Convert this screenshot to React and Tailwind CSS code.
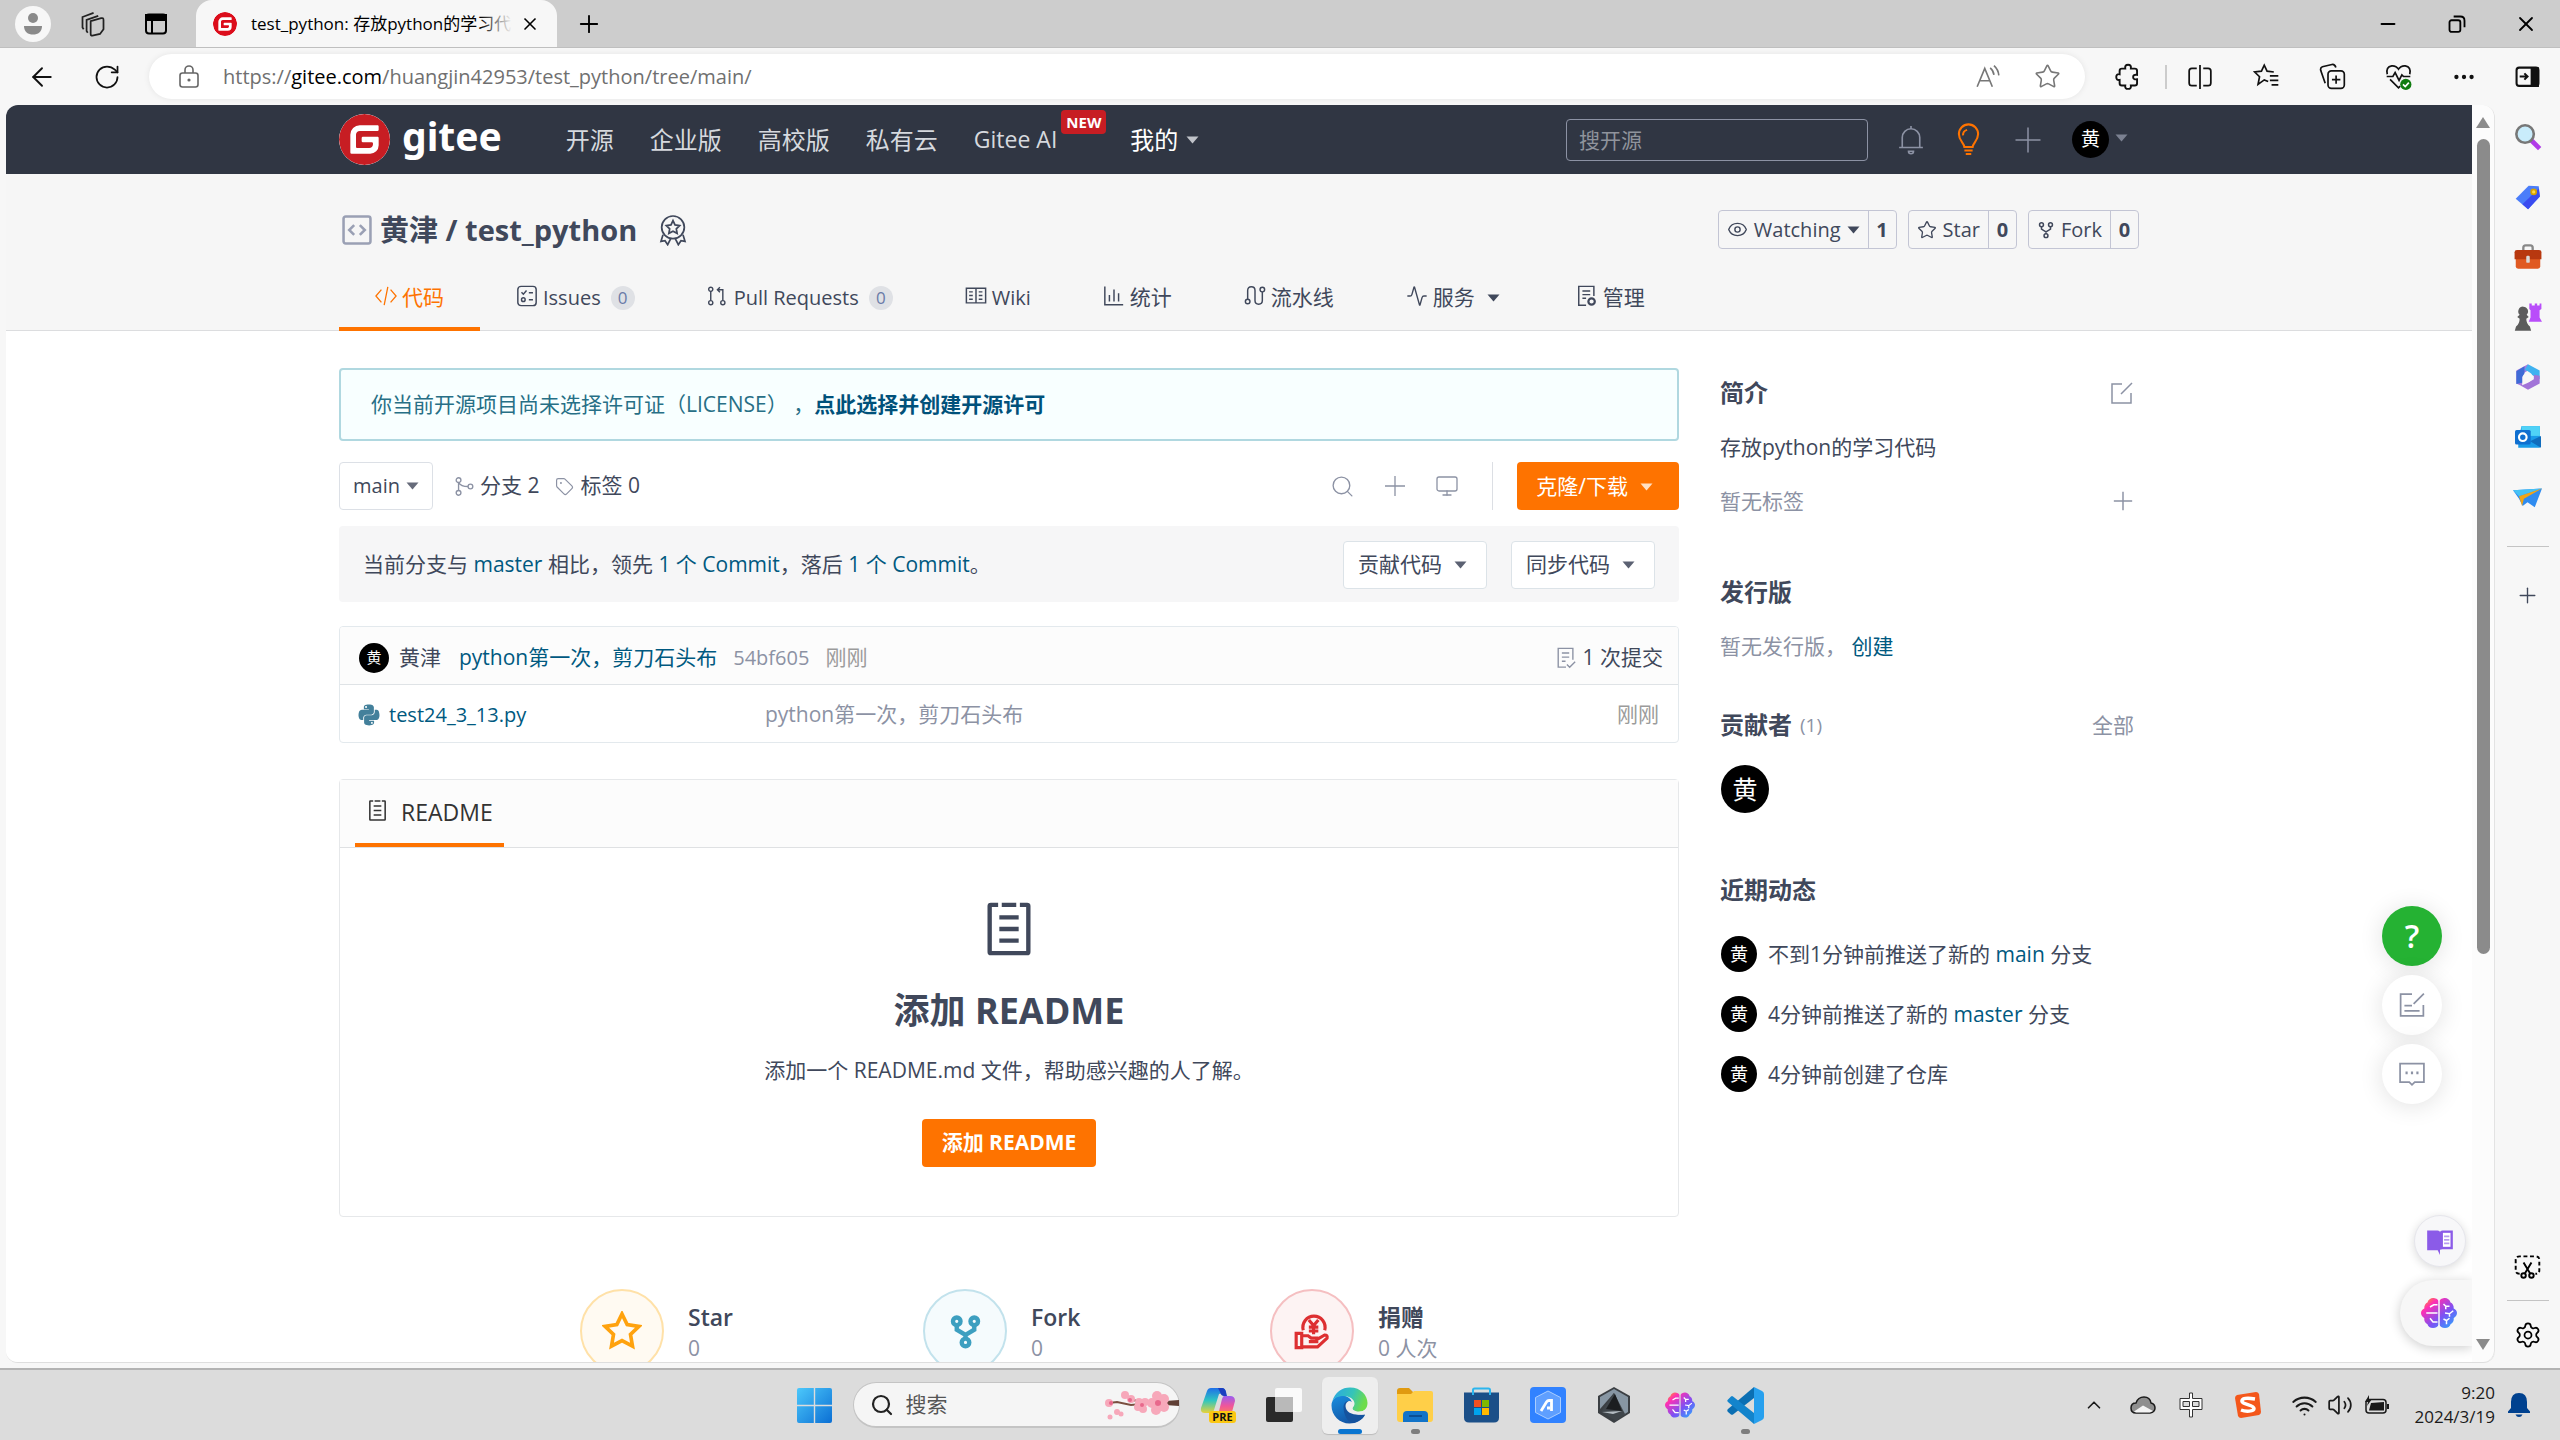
import {
  ArrowLeft,
  RotateCw,
  Star,
  Plus,
  X,
  Minus,
  Search,
  Monitor,
  Tag,
  ChevronUp,
  Activity,
  Ellipsis,
  Settings,
  Eye,
  Volume2,
  Wifi,
} from 'lucide-react';
import { SiGitee } from 'react-icons/si';
import { FaPython } from 'react-icons/fa';

function Icon({ size = 24, box = 24, sw = 1.5, className = '', children }) {
  return (
    <svg
      width={size}
      height={size}
      viewBox={`0 0 ${box} ${box}`}
      fill="none"
      stroke="currentColor"
      strokeWidth={sw}
      className={`shrink-0 ${className}`}
      aria-hidden="true"
    >
      {children}
    </svg>
  );
}

function Caret({ className = '' }) {
  return (
    <svg width="13" height="8" viewBox="0 0 13 8" className={`shrink-0 ${className}`} fill="currentColor" aria-hidden="true">
      <path d="M0.5 0.5h12L6.5 7.5z" />
    </svg>
  );
}

function Avatar({ className }) {
  return (
    <span className={`flex shrink-0 items-center justify-center rounded-full bg-black leading-none text-white ${className}`}>
      黄
    </span>
  );
}

function ForkIcon({ size, sw, className }) {
  return (
    <Icon size={size} sw={sw} className={className}>
      <circle cx="6" cy="5" r="2.6" />
      <circle cx="18" cy="5" r="2.6" />
      <circle cx="12" cy="19.5" r="2.6" />
      <path d="M6 7.6v3.2l6 3.6 6-3.6V7.6M12 14v3" />
    </Icon>
  );
}

function ReadmeIcon({ size, sw, className }) {
  return (
    <Icon size={size} sw={sw} className={className}>
      <path d="M7.500 2H4.500q-.5 0-.5.5V21.500q0 .5.5.5h15q.5 0 .5-.5V2.500q0-.5-.5-.5H16.500M9 2h6M8 7.200h8M8 12h8M8 16.800h8" />
    </Icon>
  );
}

function BrainIcon({ size, id }) {
  return (
    <Icon size={size} sw={1.2}>
      <defs>
        <linearGradient id={id} x1="0" y1="0" x2="1" y2="1">
          <stop offset="0" stopColor="#ffb300" />
          <stop offset="0.25" stopColor="#ff2fb3" />
          <stop offset="0.6" stopColor="#7b52f4" />
          <stop offset="1" stopColor="#20b4ff" />
        </linearGradient>
      </defs>
      <path
        fill={`url(#${id})`}
        stroke="none"
        d="M11.500 4v16c0 1-1.500 2-3.500 2s-3.300-1-3.700-2.500C2.500 18.500 2 17 2.200 15.500 1 14.500 0 13.500 0 12s1-2.500 2.200-3C2 7 3 5.500 4.300 5 4.800 3 6.500 2 8 2s3.500.8 3.500 2zM12.500 4v16c0 1 1.500 2 3.500 2s3.300-1 3.700-2.500c1.800-1 2.300-2.500 2.100-4C23 14.500 24 13.500 24 12s-1-2.500-2.200-3c.2-2-.8-3.500-2.100-4-.5-2-2.200-3-3.700-3s-3.500.8-3.500 2z"
      />
      <path stroke="#fff" strokeWidth="1" d="M11 6.500H8.500L6 8M11 12H3.500M11 18H8l-2-2.500M15 6l1.500 1.500L19 7.500M16.500 7.500V9.500M16 12l3 .5 2.500-2M19 12.500v2M15 16l2 1 2-1.500M17 17v2.500" />
    </Icon>
  );
}

function TitleBar() {
  return (
    <div className="flex h-12 shrink-0 items-center border-b border-[#bfbfbf] bg-[#cdcdcd]">
      <button className="ml-[15px] flex size-9 items-center justify-center rounded-full bg-[#f7f7f7] text-[#8a8a8a]" aria-label="个人资料">
        <svg width="20" height="24" viewBox="0 0 20 24" fill="currentColor">
          <circle cx="10" cy="6" r="5" />
          <path d="M1 14h18c0 6-4 8.500-9 8.500S1 20 1 14z" />
        </svg>
      </button>
      <button className="ml-7 flex size-7 items-center justify-center" aria-label="工作区">
        <Icon size={28} sw={1.5} className="text-[#222]">
          <path d="M10 9.500l9-2.500q2-.5 2 1.500v8l-3 4-6.500 1.500q-1.500 0-1.500-1.500z" />
          <path d="M7.500 19.500L6.500 18V8.500L16.500 5M4 16.500L3 15V6l9.500-3.500" />
        </Icon>
      </button>
      <button className="ml-[35px] flex size-7 items-center justify-center" aria-label="标签页操作">
        <Icon size={24} sw={2} className="text-black">
          <rect x="2" y="2.500" width="20" height="19" rx="3" />
          <path d="M2 3h20v5H2z" fill="currentColor" />
          <path d="M8 8v13" />
        </Icon>
      </button>
      <div className="ml-[26px] flex h-full w-[361px] items-center rounded-t-2xl bg-[#f7f7f7] px-[17px]">
        <SiGitee className="size-6 shrink-0 rounded-full bg-white text-[#dc0d1b]" />
        <span className="relative ml-[14px] flex-1 overflow-hidden text-[17px] whitespace-nowrap text-black">
          test_python: 存放python的学习代码
          <span className="absolute inset-y-0 right-0 w-8 bg-linear-to-r from-transparent to-[#f7f7f7]" />
        </span>
        <button aria-label="关闭标签页" className="ml-2 text-black">
          <X className="size-5" strokeWidth={2} />
        </button>
      </div>
      <button className="ml-[18px] text-black" aria-label="新建标签页">
        <Plus size={28} strokeWidth={1.600} />
      </button>
      <div className="ml-auto flex items-center text-black">
        <button className="flex w-[69px] justify-center" aria-label="最小化">
          <Minus size={22} strokeWidth={2.200} />
        </button>
        <button className="flex w-[69px] justify-center" aria-label="还原">
          <Icon size={20} sw={2.200}>
            <rect x="3" y="7.500" width="13" height="14" rx="2.500" />
            <path d="M8 3h8q5 0 5 5v8" />
          </Icon>
        </button>
        <button className="flex w-[69px] justify-center" aria-label="关闭">
          <X size={24} strokeWidth={1.800} />
        </button>
      </div>
    </div>
  );
}

function AddressBar() {
  return (
    <div className="flex h-[57px] shrink-0 items-center bg-[#f7f7f7] text-[#111]">
      <button className="ml-[27px]" aria-label="返回">
        <ArrowLeft size={30} strokeWidth={1.500} />
      </button>
      <button className="ml-9" aria-label="刷新">
        <RotateCw size={28} strokeWidth={1.500} />
      </button>
      <div className="ml-7 flex h-[45px] min-w-0 flex-1 items-center rounded-full bg-white pr-6 pl-7 shadow-[0_0_6px_rgba(0,0,0,0.08)]">
        <Icon size={24} sw={1.600} className="text-[#666]">
          <rect x="3" y="8" width="18" height="14" rx="2.500" />
          <path d="M8 8V5a4 4 0 0 1 8 0v3" />
          <circle cx="12" cy="15" r="0.8" fill="currentColor" />
        </Icon>
        <div className="ml-[22px] flex-1 text-[20px] text-[#707070]">
          https://<span className="text-black">gitee.com</span>/huangjin42953/test_python/tree/main/
        </div>
        <button aria-label="大声朗读" className="text-[#777]">
          <Icon size={26} sw={1.500}>
            <path d="M2 21L9 4l7 17M4.500 15.500h9M14 3.500q3 2.500 3.500 6.500M17.500 1.500q4 3.500 4.500 9" />
          </Icon>
        </button>
        <button aria-label="收藏" className="ml-[33px] text-[#777]">
          <Star size={27} strokeWidth={1.400} />
        </button>
      </div>
      <button className="ml-[29px]" aria-label="扩展">
        <Icon size={27} sw={1.700}>
          <path d="M7 5h3q-.5-3.500 2.500-3.500T15 5h3.500q2 0 2 2v3.500q-3.500-.5-3.500 2t3.500 2V18q0 2-2 2H15q.5 3-2.500 3T10 20H7q-2 0-2-2v-3q-3 .5-3-2.500T5 10V7q0-2 2-2z" />
        </Icon>
      </button>
      <div className="ml-6 h-6 w-[2px] bg-[#ccc]" />
      <div className="flex items-center pr-[3px]">
        <button className="flex w-[66px] justify-center" aria-label="分屏">
          <Icon size={26} sw={1.600}>
            <path d="M12 1v22M9 4H4.500Q2 4 2 6.500v11Q2 20 4.500 20H9M15 4h4.500Q22 4 22 6.500v11q0 2.500-2.500 2.500H15" />
          </Icon>
        </button>
        <button className="flex w-[66px] justify-center" aria-label="收藏夹">
          <Icon size={27} sw={1.500}>
            <path d="M13.500 16.500L10 15l-5.500 4 1.300-6.800L1.500 8l6-.8L10 2l2.500 5.200 6 .8M15 11.500h7.500M15 15.500h7.500M16.500 19.500h6" />
          </Icon>
        </button>
        <button className="flex w-[66px] justify-center" aria-label="集锦">
          <Icon size={27} sw={1.500}>
            <rect x="8" y="7" width="14.500" height="15.500" rx="3" />
            <path d="M15.200 11v7.500M11.500 14.800H19M5.500 18L1.500 6.500Q1 4 3 3.300l8.500-2q2.500-.5 3.500 2.700" />
          </Icon>
        </button>
        <button className="relative flex w-[66px] justify-center" aria-label="浏览器概要">
          <Icon size={27} sw={1.500}>
            <path d="M2 10Q.5 3.500 6 2.500q4-.3 6 3 2-3.300 6-3 5.500 1 4 7.500M1.500 12H7l2-3.500 3.500 7 2.500-5 1.500 1.500h6M4.500 14.500L12 22l1.500-1.500" />
            <circle cx="18.500" cy="19" r="5" fill="#107c10" stroke="none" />
            <path d="M16 19l2 2 3.200-3.500" stroke="#fff" />
          </Icon>
        </button>
        <button className="flex w-[66px] justify-center" aria-label="设置及其他">
          <Ellipsis size={26} strokeWidth={2} />
        </button>
        <button className="flex w-[60px] justify-center" aria-label="侧栏">
          <Icon size={25} sw={2}>
            <rect x="1.500" y="3.500" width="21" height="17.500" rx="2.500" />
            <path d="M16 4h6v17h-6z" fill="currentColor" />
            <path d="M4.500 12h7M9 9l3 3-3 3" />
          </Icon>
        </button>
      </div>
    </div>
  );
}

function SiteHeader() {
  return (
    <header className="h-[69px] bg-[#303643] text-[24px] text-[#d6d9de]">
      <div className="mx-auto flex h-full max-w-[1800px] items-center">
        <a href="#home" className="flex items-center">
          <SiGitee className="size-[51px] rounded-full bg-white text-[#c71d23]" />
          <span className="ml-3 pb-2 font-['Noto_Sans',sans-serif] text-[39px] leading-none font-bold text-white">gitee</span>
        </a>
        <nav className="ml-16 flex items-center gap-9">
          <a href="#explore">开源</a>
          <a href="#enterprise">企业版</a>
          <a href="#education">高校版</a>
          <a href="#cloud">私有云</a>
          <a href="#ai" className="relative mr-[37px] text-[23px]">
            Gitee AI
            <span className="absolute -top-3 left-full ml-1 rounded-sm bg-[#c71d23] px-[5px] text-[15px] leading-6 font-bold text-white">NEW</span>
          </a>
          <a href="#mine" className="flex items-center gap-2 text-white">
            我的 <Caret className="text-[#c0c3c9]" />
          </a>
        </nav>
        <input
          aria-label="搜开源"
          placeholder="搜开源"
          className="ml-auto h-[42px] w-[302px] rounded-sm border border-[#8c92a4] bg-transparent px-3 text-[21px] placeholder:text-[#8f939c]"
        />
        <div className="ml-[28px] flex items-center pr-[11px] text-[#8c92a4]">
          <button aria-label="通知">
            <Icon size={30} sw={1.300}>
              <path d="M2.500 18h19M5 18V10a7 7 0 0 1 14 0v8M12 3V.8M10 21h4a2 2 0 0 1-4 0z" />
            </Icon>
          </button>
          <button aria-label="动态" className="ml-[26px] text-[#fe7300]">
            <Icon size={33} sw={1.500}>
              <path d="M9 17.500c0-3-4-4.500-4-9.500a7 7 0 0 1 14 0c0 5-4 6.500-4 9.500zM8 9a4 4 0 0 1 3-4M9 20h6M10 22.500h4" />
            </Icon>
          </button>
          <button aria-label="新建" className="ml-[28px]">
            <Icon size={30} sw={1.200}>
              <path d="M12 2v20M2 12h20" />
            </Icon>
          </button>
          <button aria-label="账户" className="ml-[29px] flex items-center gap-1.5">
            <Avatar className="size-[37px] text-[19px]" />
            <Caret className="mb-1 text-[#7b8191]" />
          </button>
        </div>
      </div>
    </header>
  );
}

function CountButton({ icon, label, count, caret }) {
  return (
    <div className="flex h-[39px] items-stretch rounded-sm border border-[#c3c5d4] text-[20px] text-[#40485b]">
      <button className="flex items-center gap-1.5 px-2">
        {icon}
        {label}
        {caret && <Caret className="text-[#40485b]" />}
      </button>
      <a href="#count" className="flex w-7 items-center justify-center border-l border-[#c3c5d4] font-bold">
        {count}
      </a>
    </div>
  );
}

function RepoTab({ icon, label, badge, caret, active }) {
  return (
    <a
      href="#tab"
      className={`flex h-full items-center border-b-4 px-9 ${active ? 'border-[#fe7300] text-[#fe7300]' : 'border-transparent'}`}
    >
      <span className="mb-1 flex w-[27px] shrink-0">{icon}</span>
      {label}
      {badge && (
        <span className="ml-2.5 flex size-6 items-center justify-center rounded-full bg-[#dfe1e5] text-[17px] text-[#6a7ba8]">{badge}</span>
      )}
      {caret && <Caret className="mr-1 ml-3" />}
    </a>
  );
}

function RepoHeader() {
  return (
    <section className="h-[157px] border-b border-[#dcdddf] bg-[#f6f6f6] text-[#40485b]">
      <div className="mx-auto flex h-full max-w-[1800px] flex-col">
        <div className="flex h-[95px] items-center pt-4">
          <Icon size={34} sw={1.800} className="ml-px text-[#9aa0b4]">
            <rect x="2.500" y="2.500" width="19" height="19" rx="1.500" />
            <path d="M10 8.500L6.500 12l3.500 3.500M14 8.500l3.500 3.500-3.500 3.500" />
          </Icon>
          <h1 className="ml-1.5 text-[29px] font-bold">
            <a href="#owner">黄津</a> / <a href="#repo">test_python</a>
          </h1>
          <Icon size={32} sw={1.300} className="ml-5">
            <circle cx="12" cy="10" r="8.500" />
            <path d="M12 5l1.500 3.200 3.500.5-2.500 2.400.6 3.400-3.100-1.600-3.100 1.600.6-3.400L7 8.700l3.500-.5zM4.500 15.500L3 20.500l3-.5 2 3 2.300-4.600M19.500 15.500l1.500 5-3-.5-2 3-2.300-4.600" />
          </Icon>
          <div className="ml-auto flex gap-[11px]">
            <CountButton icon={<Eye size={21} strokeWidth={1.600} />} label="Watching" count="1" caret />
            <CountButton icon={<Star size={20} strokeWidth={1.600} />} label="Star" count="0" />
            <CountButton icon={<ForkIcon size={18} sw={2} />} label="Fork" count="0" />
          </div>
        </div>
        <nav className="-mb-px flex h-[62px] text-[20px]">
          <RepoTab
            active
            label={<span className="text-[21px]">代码</span>}
            icon={
              <Icon size={22} sw={1.400}>
                <path d="M7 5L1 12l6 7M17 5l6 7-6 7M14 2l-4 20" />
              </Icon>
            }
          />
          <RepoTab
            label="Issues"
            badge="0"
            icon={
              <Icon size={22} sw={1.600}>
                <rect x="2" y="1.500" width="20" height="21" rx="3.500" />
                <path d="M6 8l2 2 3.500-4M14 8.500h4.500M14 16h4.500" />
                <circle cx="8" cy="16" r="2" />
              </Icon>
            }
          />
          <RepoTab
            label="Pull Requests"
            badge="0"
            icon={
              <Icon size={20} sw={1.700}>
                <circle cx="4.500" cy="4" r="2.500" />
                <circle cx="4.500" cy="20" r="2.500" />
                <circle cx="19" cy="20" r="2.500" />
                <path d="M4.500 6.500v11M19 17.500V4.500h-6M15.500 1.500l-3 3 3 3" />
              </Icon>
            }
          />
          <RepoTab
            label="Wiki"
            icon={
              <Icon size={22} sw={1.600}>
                <path d="M1.500 3.500h21v16h-21zM12 3.500v16M4.500 7.500h4M4.500 11.500h4M4.500 15.500h4M15 7.500h4M15 11.500h4M15 15.500h4" />
              </Icon>
            }
          />
          <RepoTab
            label={<span className="text-[21px]">统计</span>}
            icon={
              <Icon size={22} sw={1.600}>
                <path d="M2 1.500v20h20M7 18v-7M12 18V5M17 18V9" />
              </Icon>
            }
          />
          <RepoTab
            label={<span className="text-[21px]">流水线</span>}
            icon={
              <Icon size={22} sw={1.600}>
                <circle cx="4" cy="18" r="2.500" />
                <circle cx="20" cy="5" r="2.500" />
                <path d="M4 15.500V6q0-4 4-4t4 4v11q0 4 4 4t4-4V7.500" />
              </Icon>
            }
          />
          <RepoTab label={<span className="text-[21px]">服务</span>} caret icon={<Activity size={22} strokeWidth={1.500} />} />
          <RepoTab
            label={<span className="text-[21px]">管理</span>}
            icon={
              <Icon size={22} sw={1.600}>
                <path d="M11 22H3V1.500h16.500V12M7 6.500h8.500M7 10.500h8.500M7 14.500h4" />
                <circle cx="17" cy="18" r="3.500" strokeWidth="2.400" />
              </Icon>
            }
          />
        </nav>
      </div>
    </section>
  );
}

const link = 'text-[#005980]';

function RepoMain() {
  return (
    <div className="min-w-0 flex-1">
      <div className="flex h-[73px] items-center rounded border-2 border-[#b0d8e0] bg-[#f8ffff] px-[30px] text-[#276f86]">
        <p>
          你当前开源项目尚未选择许可证（LICENSE） ，
          <a href="#license" className="font-bold text-[#00517a]">
            点此选择并创建开源许可
          </a>
        </p>
      </div>

      <div className="mt-[21px] flex h-12 items-center">
        <button className="flex h-12 items-center gap-1.5 rounded-sm border border-[#dce0e6] px-[13px] text-[20px]">
          main <Caret className="text-[#666b7a]" />
        </button>
        <a href="#branches" className="ml-[22px] flex items-center gap-1.5">
          <Icon size={19} sw={1.700} className="text-[#8c92a4]">
            <circle cx="4.500" cy="4" r="3" />
            <circle cx="4.500" cy="20" r="3" />
            <circle cx="19.500" cy="12" r="3" />
            <path d="M4.500 7v10M4.500 7q3 5 12 5" />
          </Icon>
          分支 2
        </a>
        <a href="#tags" className="ml-4 flex items-center gap-1.5">
          <Tag size={19} strokeWidth={1.500} className="text-[#8c92a4]" />
          标签 0
        </a>
        <div className="ml-auto flex items-center gap-7 text-[#8c92a4]">
          <button aria-label="搜索文件">
            <Search size={25} strokeWidth={1.300} />
          </button>
          <button aria-label="添加文件">
            <Icon size={24} sw={1.300}>
              <path d="M12 2v20M2 12h20" />
            </Icon>
          </button>
          <button aria-label="Web IDE">
            <Monitor size={24} strokeWidth={1.300} />
          </button>
        </div>
        <div className="ml-[33px] h-12 w-px bg-[#dcdfe4]" />
        <button className="ml-6 flex h-12 items-center gap-3 rounded-sm bg-[#fe7300] pt-0.5 pr-[26px] pl-[19px] text-white">
          克隆/下载 <Caret className="text-[#ffe0c4]" />
        </button>
      </div>

      <div className="mt-4 flex h-[76px] items-center rounded bg-[#f6f6f7] px-6 pt-0.5">
        <p className="flex-1">
          当前分支与{' '}
          <a href="#master" className={link}>
            master
          </a>{' '}
          相比，领先{' '}
          <a href="#ahead" className={link}>
            1 个 Commit
          </a>
          ，落后{' '}
          <a href="#behind" className={link}>
            1 个 Commit
          </a>
          。
        </p>
        {['贡献代码', '同步代码'].map((label) => (
          <button key={label} className="ml-6 flex h-12 w-[144px] items-center gap-3 rounded-sm border border-[#dce3e8] bg-white px-3.5">
            {label} <Caret className="text-[#5b6172]" />
          </button>
        ))}
      </div>

      <div className="mt-6 overflow-hidden rounded border border-[#e3e9ed]">
        <div className="flex h-[58px] items-center border-b border-[#dfe3e6] bg-[#fcfcfc] pt-1 pr-[15px] pl-[19px]">
          <Avatar className="size-[30px] text-[15px]" />
          <a href="#author" className="ml-2.5">
            黄津
          </a>
          <a href="#commit" className={`ml-[18px] ${link}`}>
            python第一次，剪刀石头布
          </a>
          <span className="ml-4 text-[20px] text-[#8c92a4]">54bf605</span>
          <span className="ml-4 text-[#9b9b9b]">刚刚</span>
          <Icon size={22} sw={1.500} className="ml-auto text-[#8c92a4]">
            <path d="M12 22H3.500V1.500h16V14M7.500 6.500h8M7.500 11h8M7.500 15.500h4M13 19l3 3 6-6" />
          </Icon>
          <a href="#commits" className="ml-1.5">
            1 次提交
          </a>
        </div>
        <table className="w-full table-fixed">
          <tbody>
            <tr className="h-[57px]">
              <td className="w-[425px] pt-0.5 pl-[17px]">
                <a href="#file" className={`flex items-center gap-2 text-[20px] ${link}`}>
                  <FaPython size={24} className="text-[#43809b]" />
                  test24_3_13.py
                </a>
              </td>
              <td className="pt-0.5 text-[#8c92a4]">python第一次，剪刀石头布</td>
              <td className="w-[120px] pt-0.5 pr-[19px] text-right text-[#9b9b9b]">刚刚</td>
            </tr>
          </tbody>
        </table>
      </div>

      <div className="mt-9 rounded border border-[#e6e8ea]">
        <div className="flex h-[68px] border-b border-[#dfe1e3] bg-[#fcfcfc] pl-[15px] text-[23px] text-[#333]">
          <div className="flex items-center gap-3 border-b-4 border-[#fe7300] px-[11px] pt-0.5">
            <ReadmeIcon size={23} sw={1.600} className="mb-1" />
            README
          </div>
        </div>
        <div className="flex h-[368px] flex-col items-center pt-[52px]">
          <ReadmeIcon size={58} sw={1.800} />
          <h2 className="mt-[29px] text-[36px] leading-[48px] font-bold">添加 README</h2>
          <p className="mt-5 leading-[30px]">添加一个 README.md 文件，帮助感兴趣的人了解。</p>
          <button className="mt-[34px] h-12 rounded-sm bg-[#fe7300] px-5 font-bold text-white">添加 README</button>
        </div>
      </div>

      <div className="mt-[72px] flex pl-[241px]">
        <a href="#star" className="flex w-[343px] shrink-0 items-center">
          <span className="flex size-[84px] items-center justify-center rounded-full border-2 border-[#ffe1a8] bg-[#fffaf2] text-[#ffa20e]">
            <Icon size={40} sw={2.200}>
              <path d="M12 1.800l3.100 6.400 7.100 1-5.100 4.900 1.200 7L12 17.800l-6.300 3.300 1.200-7-5.100-4.900 7.100-1z" />
            </Icon>
          </span>
          <CountText label="Star" value="0" />
        </a>
        <a href="#fork" className="flex w-[347px] shrink-0 items-center">
          <span className="flex size-[84px] items-center justify-center rounded-full border-2 border-[#c2e2ec] bg-[#f5fbfd] text-[#3d9fc0]">
            <ForkIcon size={35} sw={3} />
          </span>
          <CountText label="Fork" value="0" />
        </a>
        <a href="#donate" className="flex shrink-0 items-center">
          <span className="flex size-[84px] items-center justify-center rounded-full border-2 border-[#f5bfc1] bg-[#fdf3f3] text-[#dd2f31]">
            <Icon size={38} sw={2}>
              <path d="M6.500 11.500a7 7 0 1 1 13.500 0M10 5l3 3.500L16 5M13 8.500V14M10 9.500h6M10 12h6" />
              <path d="M2 13.500h3.500v9H2zM5.500 15h4l2 1.500h3.500v2.200h-5M15 17.500l5-3q2 0 1.500 2l-6 5.500h-10" />
            </Icon>
          </span>
          <CountText label="捐赠" value="0 人次" />
        </a>
      </div>
    </div>
  );
}

function CountText({ label, value }) {
  return (
    <span className="ml-6 flex flex-col pt-0.5">
      <span className="text-[23px] leading-[32px] font-semibold">{label}</span>
      <span className="leading-[30px] text-[#8c92a4]">{value}</span>
    </span>
  );
}

const activities = [
  { text: '不到1分钟前推送了新的', branch: 'main', tail: '分支' },
  { text: '4分钟前推送了新的', branch: 'master', tail: '分支' },
  { text: '4分钟前创建了仓库' },
];

function EditIcon({ size }) {
  return (
    <Icon size={size} sw={1.500}>
      <path d="M12 3H2v19h19V12M11 13L22 2" />
    </Icon>
  );
}

function RepoAside() {
  return (
    <aside className="w-[414px] shrink-0 pt-[9px] leading-8">
      <div className="flex items-center justify-between">
        <h3 className="text-[24px] font-bold">简介</h3>
        <button aria-label="编辑简介" className="text-[#8c92a4]">
          <EditIcon size={24} />
        </button>
      </div>
      <p className="mt-[22px]">存放python的学习代码</p>
      <div className="mt-[22px] flex items-center justify-between text-[#8c92a4]">
        暂无标签
        <button aria-label="添加标签">
          <Icon size={22} sw={1.600}>
            <path d="M12 2v20M2 12h20" />
          </Icon>
        </button>
      </div>
      <h3 className="mt-[59px] text-[24px] font-bold">发行版</h3>
      <p className="mt-[22px] text-[#8c92a4]">
        暂无发行版，{' '}
        <a href="#release" className={link}>
          创建
        </a>
      </p>
      <div className="mt-[47px] flex items-center text-[#8c92a4]">
        <h3 className="mr-2 text-[24px] font-bold text-[#40485b]">贡献者</h3>
        <span className="text-[19px]">(1)</span>
        <a href="#contributors" className="ml-auto">
          全部
        </a>
      </div>
      <Avatar className="ml-px mt-6 size-12 text-[25px]" />
      <h3 className="mt-[61px] text-[24px] font-bold">近期动态</h3>
      <ul className="mt-[30px] flex flex-col gap-6 pl-px">
        {activities.map((item) => (
          <li key={item.text} className="flex h-9 items-center gap-[11px]">
            <Avatar className="size-9 text-[18px]" />
            <span>
              {item.text}{' '}
              {item.branch && (
                <a href="#branch" className={link}>
                  {item.branch}
                </a>
              )}{' '}
              {item.tail}
            </span>
          </li>
        ))}
      </ul>
    </aside>
  );
}

function FloatingTools() {
  const round = 'flex size-[60px] items-center justify-center rounded-full shadow-[0_2px_24px_rgba(0,0,0,0.12)]';
  return (
    <>
      <div className="absolute right-[30px] bottom-[258px] flex flex-col gap-[9px] text-[#8c92a4]">
        <button className={`${round} bg-[#25b233] text-[32px] leading-none font-semibold text-white`}>?</button>
        <button className={`${round} bg-white`} aria-label="反馈">
          <Icon size={26} sw={1.600}>
            <path d="M12 2H1.500v20h21V12M13.500 11L23 1.500M5 12.500h7M5 17.500h14" />
          </Icon>
        </button>
        <button className={`${round} bg-white`} aria-label="评论">
          <Icon size={26} sw={1.600}>
            <path d="M1 2.500h22v17h-8.500L12 22l-2.500-2.500H1z" />
            <path d="M6 11h2M11 11h2M16 11h2" strokeWidth="2.500" />
          </Icon>
        </button>
      </div>
      <button
        aria-label="阅读"
        className="absolute right-[6px] bottom-[95px] flex size-[52px] items-center justify-center rounded-full border border-[#e6e6ec] bg-[#f7f7f9] shadow-[0_2px_10px_rgba(0,0,0,0.15)]"
      >
        <Icon size={28}>
          <path d="M1 3h9q2 .2 2 1.500V19.500l2-.5h9V3h-9q-2 .2-2 1.500L12 24l-2-4H1z" fill="#8b5be8" stroke="none" />
          <path d="M14.500 5H21v12h-6.500z" fill="#fff" stroke="none" />
          <path d="M15.500 8H20M15.500 11H20M15.500 14H20" stroke="#b79af0" />
        </Icon>
      </button>
      <button
        aria-label="助手"
        className="absolute right-0 bottom-4 flex h-[66px] w-[72px] items-center rounded-l-full bg-[#f7f7f7] pl-[21px] shadow-[0_2px_12px_rgba(0,0,0,0.2)]"
      >
        <BrainIcon size={36} id="brain-float" />
      </button>
    </>
  );
}

function Scrollbar() {
  return (
    <div className="flex w-[23px] shrink-0 flex-col items-center rounded-r-xl border-r border-[#e3e3e3] bg-[#fcfcfc] py-[12px] text-[#8b8b8b]">
      <svg width="14" height="11" viewBox="0 0 14 11" fill="currentColor">
        <path d="M7 0l7 11H0z" />
      </svg>
      <div className="mt-[11px] h-[815px] w-[13px] rounded-full bg-[#8b8b8b]" />
      <svg width="14" height="11" viewBox="0 0 14 11" fill="currentColor" className="mt-auto">
        <path d="M7 11l7-11H0z" />
      </svg>
    </div>
  );
}

function EdgeSidebar() {
  const slot = 'flex h-[60px] w-full items-center justify-center';
  return (
    <div className="flex w-[65px] shrink-0 flex-col items-center bg-[#f7f7f7] pt-[2px]">
      <button className={slot} aria-label="搜索">
        <Icon size={28}>
          <path d="M15 15l7 7" stroke="#b13be8" strokeWidth="4" />
          <circle cx="9.500" cy="9.500" r="7.500" fill="#c9ecfb" stroke="#777" strokeWidth="2.200" />
        </Icon>
      </button>
      <button className={slot} aria-label="购物">
        <Icon size={27}>
          <path d="M13 1.500l9 .5 1 9-10.500 11.500L1.500 13z" fill="#4a7dfa" stroke="none" />
          <path d="M23 11L12.500 22.500l-5-4.500L22 4z" fill="#3a4bf0" stroke="none" />
          <circle cx="17.500" cy="7" r="2.200" fill="#ffd84a" stroke="#d9a200" />
        </Icon>
      </button>
      <button className={slot} aria-label="工具">
        <Icon size={28}>
          <path d="M8 6.500V4q0-2 2-2h4q2 0 2 2v2.500" stroke="#888" strokeWidth="2" />
          <path d="M1.500 12h21v8q0 2-2 2h-17q-2 0-2-2z" fill="#e05a22" stroke="none" />
          <path d="M0.500 8q0-2 2-2h19q2 0 2 2v6h-23z" fill="#b8380f" stroke="none" />
          <rect x="10.500" y="11" width="3" height="6" rx="1" fill="#d9d9d9" stroke="none" />
        </Icon>
      </button>
      <button className={slot} aria-label="游戏">
        <Icon size={29}>
          <path d="M13.500 0.500h2V2h2.500V.5h2V2H22V.5h1.500V5L22 6v6l2 3.500H13L14.500 12V6l-1-1z" fill="#b94dfa" stroke="none" />
          <path d="M8.500 3a4 4 0 0 1 2.800 6.800l1.700 1.700-2 1.500q0 4 3 6.500l1 3.500H1.500l1-3.500q3-2.500 3-6.500l-2-1.500 2-1.700A4 4 0 0 1 8.500 3z" fill="#5c5c5c" stroke="none" />
        </Icon>
      </button>
      <button className={slot} aria-label="Microsoft 365">
        <Icon size={28}>
          <path d="M12 1L2 6.500v11L7 20V9.500l5-3z" fill="#a678e0" stroke="none" />
          <path d="M12 1l10 5.500V14l-7-4-3-3-3-1z" fill="#3fb2f0" stroke="none" />
          <path d="M9 2.800V9l-2 3v5l-5 1V7z" fill="#3f6bd6" stroke="none" />
          <path d="M22 11v6.500L12 23l-6-3.500 6-2.500 5-3V10z" fill="#a274d8" stroke="none" />
          <circle cx="12" cy="12" r="4" fill="#f7f7f7" stroke="none" />
        </Icon>
      </button>
      <button className={slot} aria-label="Outlook">
        <Icon size={26}>
          <path d="M6 2h17v20H3V14z" fill="#1a9be8" stroke="none" />
          <path d="M6 2h17v9H6z" fill="#4fd2f7" stroke="none" />
          <path d="M24 11v11l-10-6z" fill="#0f6cbd" stroke="none" />
          <rect x="0" y="5.500" width="14.500" height="13.500" rx="1.500" fill="#0f6fd0" stroke="none" />
          <circle cx="7.200" cy="12.200" r="3.500" stroke="#fff" strokeWidth="2" />
        </Icon>
      </button>
      <button className={slot} aria-label="Drop">
        <Icon size={29}>
          <path d="M0 6l24-1.500L18 20l-6-4-4 3L5 13z" fill="#2f8cf0" stroke="none" />
          <path d="M0 6l24-1.500L5 11z" fill="#45c2f5" stroke="none" />
          <path d="M24 4.500L5 11l2.500 8 1.500-6z" fill="#f2a516" stroke="none" />
        </Icon>
      </button>
      <div className="mt-[19px] h-px w-[42px] bg-[#c4c4c4]" />
      <button className="mt-9" aria-label="自定义">
        <Plus size={25} strokeWidth={1.300} />
      </button>
      <button className="mt-auto text-black" aria-label="截图">
        <Icon size={27} sw={1.700}>
          <path d="M5 18.500q-3.500 0-3.500-3V6q0-3 3.500-3h14q3.500 0 3.500 3v9.500q0 3-3.500 3" strokeDasharray="3.500 2.300" />
          <path d="M8.500 8.500l6 10M15.500 8.500l-6 10" />
          <circle cx="8.500" cy="20" r="2" />
          <circle cx="15.500" cy="20" r="2" />
        </Icon>
      </button>
      <div className="mt-5 h-px w-[42px] bg-[#c4c4c4]" />
      <button className="mt-5 mb-[19px] text-black" aria-label="设置">
        <Settings size={28} strokeWidth={1.500} />
      </button>
    </div>
  );
}

function TaskIcon({ label, active, running, children }) {
  return (
    <button
      aria-label={label}
      className={`relative flex h-[57px] w-14 items-center justify-center rounded-md ${active ? 'bg-[#eeeeee] shadow-[0_1px_1px_rgba(0,0,0,0.15)]' : ''}`}
    >
      {children}
      {active && <span className="absolute bottom-0 h-[5px] w-6 rounded-full bg-[#0a75d0]" />}
      {running && <span className="absolute bottom-0 h-[5px] w-[9px] rounded-full bg-[#7d7d7d]" />}
    </button>
  );
}

function Taskbar() {
  return (
    <footer className="relative flex h-[72px] shrink-0 items-center justify-center border-t-2 border-[#b3b3b3] bg-[#dcdcdc]">
      <div className="flex items-center gap-[10px]">
        <TaskIcon label="开始">
          <svg width="35" height="35" viewBox="0 0 35 35">
            <defs>
              <linearGradient id="win" x1="0" y1="0" x2="1" y2="1">
                <stop offset="0" stopColor="#4cc8fb" />
                <stop offset="1" stopColor="#0b6fd4" />
              </linearGradient>
            </defs>
            <path fill="url(#win)" d="M0 2q0-2 2-2h14.800v16.800H0zM18.200 0H33q2 0 2 2v14.800H18.200zM0 18.200h16.800V35H2q-2 0-2-2zM18.200 18.200H35V33q0 2-2 2H18.200z" />
          </svg>
        </TaskIcon>
        <label className="flex h-[46px] w-[327px] items-center rounded-full border border-b-2 border-[#c4c4c4] bg-[#f5f5f5] pl-4">
          <Search size={24} strokeWidth={2.200} className="shrink-0 text-[#222]" />
          <input aria-label="搜索" placeholder="搜索" className="ml-3 w-0 flex-1 bg-transparent text-[21px] placeholder:text-[#555]" />
          <svg width="74" height="30" viewBox="0 0 74 30" fill="none">
            <path d="M60 11l14-1v6l-14-1z" fill="#5f3f35" />
            <path d="M62 12l-20 1-14-3-6-4M46 13l-20 2-14-3-8 1" stroke="#7a4f40" strokeWidth="2" />
            <g fill="#f7a8ba">
              <circle cx="4" cy="13" r="4" />
              <circle cx="20" cy="5" r="4" />
              <circle cx="26" cy="9" r="4" />
              <circle cx="34" cy="12" r="4" />
              <circle cx="40" cy="12" r="4" />
              <circle cx="33" cy="17" r="4" />
              <circle cx="38" cy="19" r="4" />
              <circle cx="52" cy="6" r="5" />
              <circle cx="47" cy="13" r="5" />
              <circle cx="51" cy="20" r="5" />
              <circle cx="59" cy="17" r="5" />
              <circle cx="59" cy="9" r="5" />
              <circle cx="12" cy="22" r="3" />
              <circle cx="16" cy="24" r="2.500" />
              <circle cx="5" cy="27" r="2.500" />
            </g>
            <g fill="#e8688c">
              <circle cx="53" cy="13" r="3" />
              <circle cx="37" cy="15" r="2" />
              <circle cx="6" cy="13" r="2" />
              <circle cx="25" cy="10" r="2" />
            </g>
          </svg>
        </label>
        <TaskIcon label="Copilot">
          <svg width="36" height="36" viewBox="0 0 36 36">
            <defs>
              <linearGradient id="cop1" x1="0" y1="0" x2="0" y2="1">
                <stop offset="0" stopColor="#1f6fe8" />
                <stop offset="0.5" stopColor="#2fc6c0" />
                <stop offset="1" stopColor="#e8d23a" />
              </linearGradient>
              <linearGradient id="cop2" x1="0" y1="0" x2="0" y2="1">
                <stop offset="0" stopColor="#9a5df0" />
                <stop offset="0.5" stopColor="#f0569a" />
                <stop offset="1" stopColor="#ff8a4a" />
              </linearGradient>
            </defs>
            <path d="M11 1h11q3 0 4 4l-7 2-5 16q-1 3-4 3H5q-5 0-4-5L7 4q1-3 4-3z" fill="url(#cop1)" />
            <path d="M24 9h6q5 0 5 5l-3 11q-1 4-5 4H14q4-1 5-5l3-12q1-3 2-3z" fill="url(#cop2)" />
            <path d="M18 1h4q3 0 4 4l1 4h-3q-3 0-4-4z" fill="#1b3fc0" />
            <rect x="9" y="24" width="27" height="12" rx="3" fill="#fbc712" />
            <text x="22.500" y="33.500" textAnchor="middle" fontSize="11" fontWeight="700" fill="#111">
              PRE
            </text>
          </svg>
        </TaskIcon>
        <TaskIcon label="任务视图">
          <svg width="36" height="34" viewBox="0 0 36 34">
            <rect x="0" y="9" width="27" height="25" rx="2" fill="#2a2a2a" />
            <rect x="9" y="0" width="27" height="24" rx="2" fill="#fafafa" />
            <path d="M9 9h18v15H11q-2 0-2-2z" fill="#b9b9b9" />
          </svg>
        </TaskIcon>
        <TaskIcon label="Microsoft Edge" active>
          <svg width="37" height="37" viewBox="0 0 37 37">
            <defs>
              <linearGradient id="edge1" x1="0" y1="0" x2="1" y2="0.300">
                <stop offset="0" stopColor="#2aa5e8" />
                <stop offset="0.6" stopColor="#35c4b8" />
                <stop offset="1" stopColor="#6ddc4c" />
              </linearGradient>
              <linearGradient id="edge2" x1="0" y1="0" x2="0.500" y2="1">
                <stop offset="0" stopColor="#1a8fe0" />
                <stop offset="1" stopColor="#1255a5" />
              </linearGradient>
            </defs>
            <path d="M.5 18.500C.5 12 6 8 12 8.500c5 .5 9 4 9 8l-4 3c0 6 6 11 17 8.500C31 33.500 25 36.500 18.500 36.500 8.500 36.500.5 28.500.5 18.500z" fill="url(#edge2)" />
            <path d="M12.500 20c0-3 1.500-5 4-6 3 1 3.500 3 2 5-1.500 5 5 10 15.500 8.500-3 5-8 8-13 8.500-5-2-8.500-9-8.500-16z" fill="#15539e" />
            <path d="M1 15C4 5 11 .5 19 .5c11 0 17.500 8 17.500 15.500 0 6-4.500 9-9 9-4 0-6-2-6-3.500s2-2 2-5C23.500 12 18 9 12.500 9 7 9 3 11 1 15z" fill="url(#edge1)" />
            <path d="M19 14c3 1 4.500 4 3 6-2 2 1 4.500 6 4.500 3 0 5-1 6.500-2L34 27c-9 2-19 0-19.500-8 0-3 2-5 4.500-5z" fill="#eeeeee" />
          </svg>
        </TaskIcon>
        <TaskIcon label="文件资源管理器" running>
          <svg width="37" height="34" viewBox="0 0 37 34">
            <path d="M0 3q0-3 3-3h9l4 4v6H0z" fill="#e09a10" />
            <path d="M0 6h14l3-3h17q2 0 2 2v26q0 3-3 3H3q-3 0-3-3z" fill="#ffcf48" />
            <path d="M6 34V27q0-4 4-4h17q4 0 4 4v7z" fill="#1273c8" />
            <path d="M12 28h13" stroke="#0b4f94" strokeWidth="2" />
          </svg>
        </TaskIcon>
        <TaskIcon label="Microsoft Store">
          <svg width="35" height="36" viewBox="0 0 35 36">
            <path d="M0 5.500h35v25q0 5-5 5H5q-5 0-5-5z" fill="#1b4f88" />
            <path d="M9 8V3q0-1.500 1.500-1.500h14q1.500 0 1.500 1.500v5" fill="none" stroke="#2bb5ee" strokeWidth="2" />
            <path d="M10 13h7v7h-7z" fill="#f25022" />
            <path d="M18 13h7v7h-7z" fill="#7fba00" />
            <path d="M10 21h7v7h-7z" fill="#00a4ef" />
            <path d="M18 21h7v7h-7z" fill="#ffb900" />
          </svg>
        </TaskIcon>
        <TaskIcon label="应用">
          <svg width="36" height="36" viewBox="0 0 36 36" fill="none">
            <rect width="36" height="36" rx="4" fill="#3182ff" />
            <path d="M18 4l12.500 6.500v15L18 32 5.500 25.500v-15z" fill="#5f9fff" stroke="#a9cdff" />
            <path d="M11 24l5.500-9q1-1.500 2.500-1.500h2.500V24M17 21h3" stroke="#fff" strokeWidth="2.800" />
          </svg>
        </TaskIcon>
        <TaskIcon label="工具">
          <svg width="34" height="36" viewBox="0 0 34 36">
            <path d="M17 0l16 9v17L17 36 1 26V9z" fill="#3b3f43" />
            <path d="M17 2l14 8v15l-5 3-9-22L3 22V10z" fill="#8796a3" />
            <path d="M17 6l11 21-9 7-15-9z" fill="#3f454a" />
            <path d="M18 7l7 17-16-2z" fill="#1c1e20" />
            <path d="M5 25l20-1-9 3z" fill="#b4bcc2" />
          </svg>
        </TaskIcon>
        <TaskIcon label="助手">
          <BrainIcon size={30} id="brain-task" />
        </TaskIcon>
        <TaskIcon label="Visual Studio Code" running>
          <svg width="37" height="37" viewBox="0 0 37 37">
            <path d="M27 0v11L6 27.500q-1 .6-2 0L1 25q-1.500-1.500 0-3z" fill="#0b6fb3" />
            <path d="M1 12.500l3-3q1-.8 2 0L27 26v11L1 15q-1.500-1.200 0-2.500z" fill="#1384cc" />
            <path d="M27 0l8 4q2 1 2 3v23q0 2-2 3l-8 4z" fill="#27a0ee" />
          </svg>
        </TaskIcon>
      </div>

      <div className="absolute inset-y-0 right-[30px] flex items-center text-[#1a1a1a]">
        <ChevronUp size={22} strokeWidth={1.800} />
        <svg width="26" height="18" viewBox="0 0 26 18" className="ml-[25px]">
          <path d="M6 17q-5 0-5-5t5-5q2-6 8-6t7 6q4 1 4 5t-5 5z" fill="#8f8f8f" stroke="#1a1a1a" strokeWidth="1.500" />
          <path d="M4 15.500l9-6 10 5.500-3 1.500H6z" fill="#f4f4f4" />
        </svg>
        <svg width="24" height="26" viewBox="0 0 24 26" className="ml-[23px]" fill="none" stroke="#333">
          <path d="M10.500 1h3v5.500H23v11h-9.500V25h-3v-7.500H1v-11h9.500zM4 9.500v5h6.500v-5zM13.500 9.500v5H20v-5z" fill="#fff" fillRule="evenodd" />
        </svg>
        <svg width="26" height="26" viewBox="0 0 26 26" className="ml-8">
          <path d="M2 3l19-3q2 0 3 2l2 18q0 2-2 3L6 26q-2 0-3-2L0 6q0-2 2-3z" fill="#f4571b" />
          <path d="M20 7q-12-2-13 1.500c-1 4 12 4 12 8 0 3-8 3.500-13 1.500" fill="none" stroke="#fff" strokeWidth="3.500" />
        </svg>
        <Wifi size={27} strokeWidth={1.800} className="ml-[30px]" />
        <Volume2 size={26} strokeWidth={1.600} className="ml-[9px]" />
        <svg width="26" height="20" viewBox="0 0 26 20" className="ml-[11px]" fill="none">
          <rect x="2" y="4.500" width="20" height="13.500" rx="3" stroke="#1a1a1a" strokeWidth="1.500" />
          <path d="M7 8l13-1v8.500H5z" fill="#1a1a1a" />
          <path d="M23 9h2v5h-2z" fill="#1a1a1a" />
          <path d="M5 0L1 7h3l-1 4 5-7H5z" fill="#1a1a1a" />
        </svg>
        <div className="ml-6 text-right text-[17px] leading-6">
          <div>9:20</div>
          <div>2024/3/19</div>
        </div>
        <svg width="22" height="24" viewBox="0 0 22 24" className="ml-[13px]" fill="#00418f">
          <path d="M11 0q8 0 8 9v6l3 3.500V20H0v-1.500L3 15V9q0-9 8-9zM7.500 21.500h7q-1 2.500-3.500 2.500t-3.500-2.500z" />
        </svg>
      </div>
    </footer>
  );
}

export default function App() {
  return (
    <div className="flex h-screen flex-col overflow-hidden bg-[#f7f7f7] font-['Open_Sans','Noto_Sans_CJK_SC',sans-serif] text-[#40485b]">
      <TitleBar />
      <AddressBar />
      <div className="flex min-h-0 flex-1">
        <div className="mb-[5px] ml-[6px] flex min-w-0 flex-1 overflow-hidden rounded-xl border-b border-[#dedede]">
          <div className="relative min-w-0 flex-1 overflow-hidden bg-white">
            <SiteHeader />
            <RepoHeader />
            <main className="mx-auto flex max-w-[1800px] gap-[41px] pt-[37px] pr-[5px] text-[21px]">
              <RepoMain />
              <RepoAside />
            </main>
            <FloatingTools />
          </div>
          <Scrollbar />
        </div>
        <EdgeSidebar />
      </div>
      <Taskbar />
    </div>
  );
}
